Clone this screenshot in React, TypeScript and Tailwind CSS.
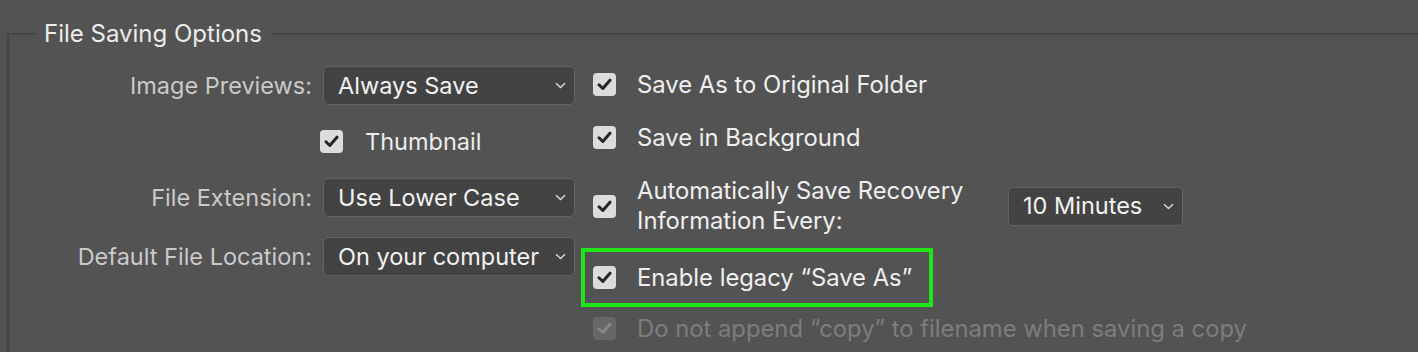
import React from "react";

const font = { fontFamily: "Inter, 'Noto Sans', sans-serif" };

const Chevron = () => (
  <svg width="11" height="7" viewBox="0 0 11 7" className="shrink-0">
    <path d="M1 1.2 L5.5 5.5 L10 1.2" fill="none" stroke="#d8d8d8" strokeWidth="1.5" />
  </svg>
);

const Check = ({ disabled = false }: { disabled?: boolean }) => (
  <div
    className={
      disabled
        ? "w-[23px] h-[23px] rounded-[4px] bg-[#676767] flex items-center justify-center shrink-0"
        : "w-[23px] h-[23px] rounded-[4px] bg-[#dcdcdc] flex items-center justify-center shrink-0"
    }
  >
    <svg width="15" height="13" viewBox="0 0 15 13">
      <path
        d="M2 6.8 L5.8 10.5 L13 2.2"
        fill="none"
        stroke={disabled ? "#858585" : "#262626"}
        strokeWidth="3"
        strokeLinecap="round"
        strokeLinejoin="round"
      />
    </svg>
  </div>
);

const Select = ({ value, w }: { value: string; w: string }) => (
  <div
    className={`${w} h-[39px] rounded-[5px] border-[1.5px] border-[#626262] bg-[#434343] flex items-center justify-between pl-[14px] pr-[8px] text-[23.5px] text-[#f2f2f2] whitespace-nowrap`}
  >
    <span>{value}</span>
    <Chevron />
  </div>
);

const Label = ({ children }: { children: React.ReactNode }) => (
  <div className="w-[312px] pr-[11px] text-right text-[23.5px] text-[#cacaca] whitespace-nowrap">{children}</div>
);

export default function App() {
  return (
    <div className="w-[1418px] h-[352px] bg-[#535353] overflow-hidden pt-[20px]" style={font}>
      <fieldset className="ml-[7px] w-[1500px] h-[400px] border-t-2 border-l-2 border-[#454545]">
        <legend className="ml-[26px] px-[9px] text-[24px] leading-[28px] text-[#ececec]">
          File Saving Options
        </legend>
        <div className="flex ml-[2px]">
          {/* left column */}
          <div className="flex flex-col pt-[18px]">
            <div className="flex items-center">
              <Label>Image Previews:</Label>
              <Select value="Always Save" w="w-[252px]" />
            </div>
            <div className="flex items-center mt-[25px] h-[23px] pl-[309px]">
              <Check />
              <span className="ml-[22px] text-[23.5px] text-[#ececec]">Thumbnail</span>
            </div>
            <div className="flex items-center mt-[25px]">
              <Label>File Extension:</Label>
              <Select value="Use Lower Case" w="w-[252px]" />
            </div>
            <div className="flex items-center mt-[20px]">
              <Label>Default File Location:</Label>
              <Select value="On your computer" w="w-[252px]" />
            </div>
          </div>

          {/* right column */}
          <div className="flex flex-col ml-[18px] pt-[25px] text-[23.8px] text-[#efefef] whitespace-nowrap">
            <div className="flex items-center h-[23px]">
              <Check />
              <span className="ml-[21px]">Save As to Original Folder</span>
            </div>
            <div className="flex items-center h-[23px] mt-[30px]">
              <Check />
              <span className="ml-[21px]">Save in Background</span>
            </div>
            <div className="flex items-center mt-[27px]">
              <Check />
              <span className="ml-[21px] w-[371px] leading-[30px]">
                Automatically Save Recovery
                <br />
                Information Every:
              </span>
              <Select value="10 Minutes" w="w-[175px]" />
            </div>
            <div className="-ml-[12px] mt-[12px] w-[352px] h-[59px] border-4 border-[#1ee619] flex items-center pl-[8px]">
              <Check />
              <span className="ml-[21px]">Enable legacy “Save As”</span>
            </div>
            <div className="flex items-center h-[23px] mt-[10px] text-[#7d7d7d]">
              <Check disabled />
              <span className="ml-[21px]">Do not append “copy” to filename when saving a copy</span>
            </div>
          </div>
        </div>
      </fieldset>
    </div>
  );
}
